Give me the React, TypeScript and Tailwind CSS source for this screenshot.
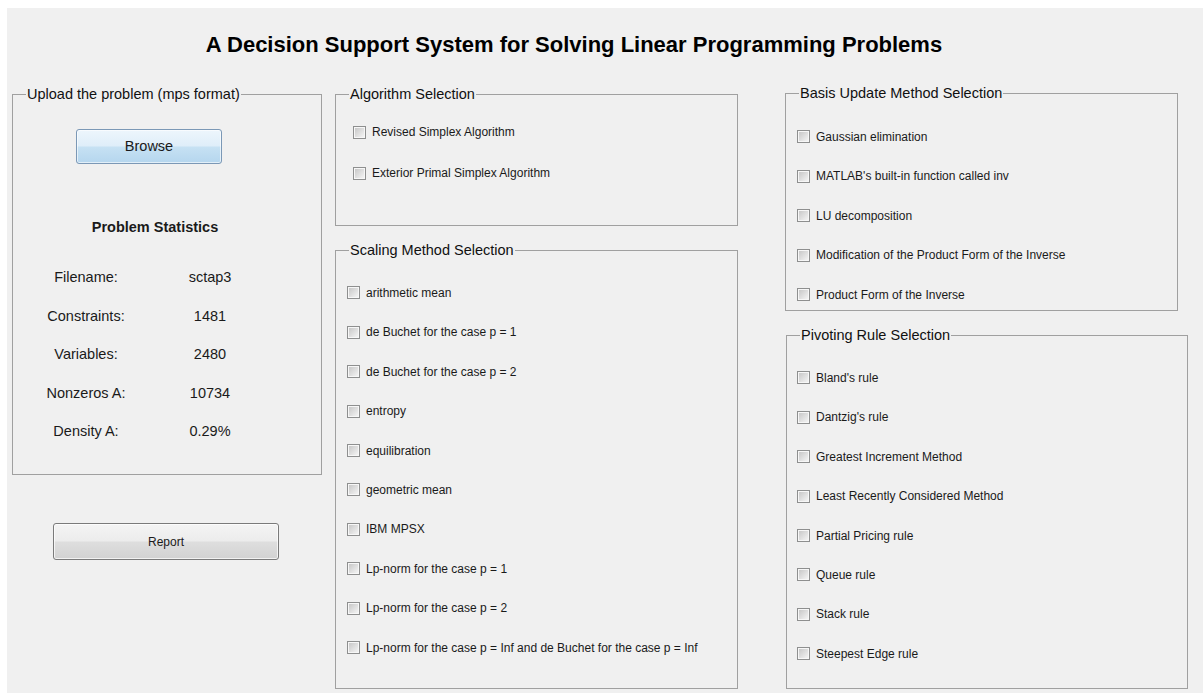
import React from "react";

const scalingMethods = [
  "arithmetic mean",
  "de Buchet for the case p = 1",
  "de Buchet for the case p = 2",
  "entropy",
  "equilibration",
  "geometric mean",
  "IBM MPSX",
  "Lp-norm for the case p = 1",
  "Lp-norm for the case p = 2",
  "Lp-norm for the case p = Inf and de Buchet for the case p = Inf",
];

const basisMethods = [
  "Gaussian elimination",
  "MATLAB's built-in function called inv",
  "LU decomposition",
  "Modification of the Product Form of the Inverse",
  "Product Form of the Inverse",
];

const pivotingRules = [
  "Bland's rule",
  "Dantzig's rule",
  "Greatest Increment Method",
  "Least Recently Considered Method",
  "Partial Pricing rule",
  "Queue rule",
  "Stack rule",
  "Steepest Edge rule",
];

const stats: [string, string][] = [
  ["Filename:", "sctap3"],
  ["Constraints:", "1481"],
  ["Variables:", "2480"],
  ["Nonzeros A:", "10734"],
  ["Density A:", "0.29%"],
];

// etched panel with its caption sitting on the top border
function Group({
  title,
  className,
  children,
}: {
  title: string;
  className: string;
  children?: React.ReactNode;
}) {
  return (
    <fieldset className={`border border-[#a0a0a0] ${className}`}>
      <legend className="ml-[13px] px-px text-[14.5px] leading-[17px] text-[#111]">
        {title}
      </legend>
      {children}
    </fieldset>
  );
}

function Check({ label, tall }: { label: string; tall?: boolean }) {
  return (
    <label
      className={`flex items-center gap-[6px] ${tall ? "h-[41px]" : "h-[39.4px]"}`}
    >
      <span className="block size-[13px] shrink-0 border border-[#8e8f8f] bg-[#f7f7f7] p-px">
        <span className="block size-full bg-linear-to-br from-[#c8c8c8] to-[#f4f4f4]" />
      </span>
      <span className="text-[12px] leading-[14px] text-[#1a1a1a]">{label}</span>
    </label>
  );
}

export default function App() {
  return (
    <div className="h-[693px] w-[1203px] bg-white pl-[7px] pt-[8px] font-['Liberation_Sans',Arial,sans-serif]">
      <div className="h-full w-full bg-[#f0f0f0]">
        <div className="w-[1134px] pt-[24px] text-center text-[22px] font-bold leading-[26px] text-black">
          A Decision Support System for Solving Linear Programming Problems
        </div>

        <div className="flex items-start">
          {/* left column: file upload + statistics */}
          <div className="ml-[5px] mt-[28px] flex flex-col">
            <Group title="Upload the problem (mps format)" className="h-[389px] w-[310px]">
              <button className="ml-[63px] mt-[26px] block h-[35px] w-[146px] rounded-[3px] border border-[#7b98b6] bg-[linear-gradient(to_bottom,#edf6fc_0%,#dfeef9_48%,#c6e1f3_52%,#b5d6ee_100%)] text-[14.5px] text-[#1a1a1a] shadow-[inset_0_0_0_1px_rgba(255,255,255,0.6)]">
                Browse
              </button>
              <div className="mt-[54px] w-[284px] text-center text-[14.5px] font-bold leading-[18px] text-[#1a1a1a]">
                Problem Statistics
              </div>
              <div className="mt-[23px] grid grid-cols-[146px_102px] text-[14.5px] text-[#1a1a1a]">
                {stats.map(([k, v]) => (
                  <React.Fragment key={k}>
                    <div className="flex h-[38.5px] items-center justify-center">{k}</div>
                    <div className="flex h-[38.5px] items-center justify-center">{v}</div>
                  </React.Fragment>
                ))}
              </div>
            </Group>
            <button className="ml-[41px] mt-[48px] h-[37px] w-[226px] rounded-[3px] border border-[#7a7a7a] bg-[linear-gradient(to_bottom,#f4f4f4_0%,#ececec_48%,#dedede_52%,#d2d2d2_100%)] text-[12px] text-[#1a1a1a] shadow-[inset_0_0_0_1px_rgba(255,255,255,0.7)]">
              Report
            </button>
          </div>

          {/* middle column */}
          <div className="ml-[13px] mt-[28px] flex flex-col">
            <Group title="Algorithm Selection" className="h-[140px] w-[403px]">
              <div className="pl-[17px] pt-[8.5px]">
                <Check tall label="Revised Simplex Algorithm" />
                <Check tall label="Exterior Primal Simplex Algorithm" />
              </div>
            </Group>
            <Group title="Scaling Method Selection" className="mt-[15.5px] h-[447.5px] w-[403px]">
              <div className="pl-[11px] pt-[14.8px]">
                {scalingMethods.map((m) => (
                  <Check key={m} label={m} />
                ))}
              </div>
            </Group>
          </div>

          {/* right column */}
          <div className="ml-[47px] mt-[26.5px] flex flex-col">
            <Group title="Basis Update Method Selection" className="h-[226.5px] w-[393px]">
              <div className="pl-[11px] pt-[15.8px]">
                {basisMethods.map((m) => (
                  <Check key={m} label={m} />
                ))}
              </div>
            </Group>
            <Group title="Pivoting Rule Selection" className="ml-px mt-[15.5px] h-[362.5px] w-[402px]">
              <div className="pl-[10px] pt-[14.8px]">
                {pivotingRules.map((m) => (
                  <Check key={m} label={m} />
                ))}
              </div>
            </Group>
          </div>
        </div>
      </div>
    </div>
  );
}
